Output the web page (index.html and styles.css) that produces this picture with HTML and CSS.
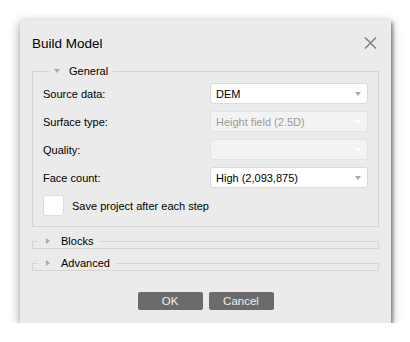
FILE: index.html
```html
<!DOCTYPE html>
<html>
<head>
    <title>Build Model</title>
    <link rel="stylesheet" href="styles.css">
</head>
<body>
    <div class="dialog">
        <div class="title-row">
            <h1>Build Model</h1>
            <svg class="close" width="13" height="12" viewBox="0 0 13 12">
                <path d="M1 0.5 L12 11.5 M12 0.5 L1 11.5" stroke="#808080" stroke-width="1.5" fill="none"/>
            </svg>
        </div>

        <fieldset class="group">
            <legend><span class="tri-down"></span>General</legend>
            <div class="rows">
                <label>Source data:</label>
                <div class="select"><span>DEM</span><span class="arrow"></span></div>

                <label>Surface type:</label>
                <div class="select disabled"><span>Height field (2.5D)</span><span class="arrow"></span></div>

                <label>Quality:</label>
                <div class="select disabled"><span></span><span class="arrow"></span></div>

                <label>Face count:</label>
                <div class="select"><span>High (2,093,875)</span><span class="arrow"></span></div>
            </div>
            <div class="check-row">
                <span class="checkbox"></span>
                <span>Save project after each step</span>
            </div>
        </fieldset>

        <fieldset class="group collapsed">
            <legend><span class="tri-right"></span>Blocks</legend>
        </fieldset>

        <fieldset class="group collapsed">
            <legend><span class="tri-right"></span>Advanced</legend>
        </fieldset>

        <div class="buttons">
            <button>OK</button>
            <button>Cancel</button>
        </div>
    </div>
</body>
</html>
```

FILE: styles.css
```css
body { margin: 0; padding: 20px 0 0 20px; background: #fff; font-family: "Liberation Sans", Arial, sans-serif; font-size: 11px; color: #000; }
.dialog { width: 371px; height: 303px; box-sizing: border-box; background: #ebebeb; padding: 13px 12px 12px; box-shadow: 0 3px 10px rgba(0,0,0,.4), 2px 2px 3px rgba(0,0,0,.35); }
.title-row { display: flex; justify-content: space-between; align-items: center; height: 20px; }
h1 { margin: 0; font-size: 13.5px; font-weight: normal; line-height: 20px; padding-top: 1px; }
.close { margin-right: 2px; }

.group { margin: 0; padding: 4px 10px 10px; border: 1px solid #d5d5d5; min-width: 0; }
.group legend { display: flex; align-items: center; height: 16px; line-height: 16px; padding: 0 5px 0 4px; margin-left: 7px; }
.group:first-of-type { margin-top: 10px; }
.tri-down { width: 0; height: 0; border-left: 3.5px solid transparent; border-right: 3.5px solid transparent; border-top: 4px solid #a9a9a9; margin-right: 9px; }
.tri-right { width: 0; height: 0; border-top: 3.5px solid transparent; border-bottom: 3.5px solid transparent; border-left: 4px solid #a9a9a9; margin: 0 11px 0 2px; }

.rows { display: grid; grid-template-columns: 1fr 158px; row-gap: 7px; align-items: center; }
.select { height: 21px; box-sizing: border-box; background: #fff; border: 1px solid #dadada; border-radius: 3px; display: flex; align-items: center; justify-content: space-between; padding: 0 6px 0 5px; }
.select.disabled { background: #f3f3f3; color: #9a9a9a; border-color: #e2e2e2; }
.arrow { width: 0; height: 0; border-left: 3.5px solid transparent; border-right: 3.5px solid transparent; border-top: 4px solid #a8a8a8; }
.select.disabled .arrow { border-top-color: #fff; }

.check-row { display: flex; align-items: center; gap: 8px; margin-top: 7px; }
.checkbox { width: 21px; height: 21px; box-sizing: border-box; background: #fff; border: 1px solid #dcdcdc; border-radius: 3px; }

.collapsed { padding: 0; margin-top: 7px; }
.collapsed legend { height: 14px; line-height: 14px; margin-left: 5px; padding: 0 6px 0 6px; }

.buttons { display: flex; justify-content: center; gap: 6px; margin-top: 21px; }
button { width: 65px; height: 18px; padding: 0; border: none; border-radius: 2px; background: #6b6b6b; color: #f0f0f0; font-family: inherit; font-size: 11.5px; }
```
